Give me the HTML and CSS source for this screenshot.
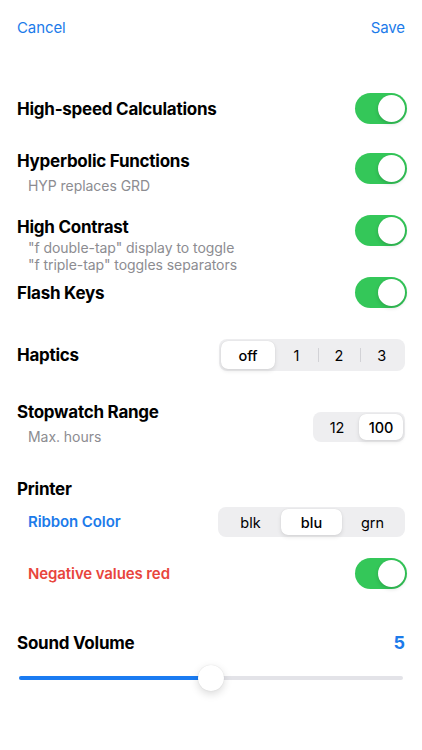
FILE: index.html
```html
<!DOCTYPE html>
<html lang="en">
<head>
<meta charset="utf-8">
<title>Settings</title>
<link rel="stylesheet" href="styles.css">
</head>
<body>
<div class="page">
  <nav class="nav">
    <span class="nav-btn">Cancel</span>
    <span class="nav-btn">Save</span>
  </nav>

  <div class="row row-hsc center">
    <div class="title">High-speed Calculations</div>
    <div class="toggle"><span class="knob"></span></div>
  </div>

  <div class="row row-hyp">
    <div class="block">
      <div class="title">Hyperbolic Functions</div>
      <div class="sub sub-hyp">HYP replaces GRD</div>
    </div>
    <div class="toggle t-hyp"><span class="knob"></span></div>
  </div>

  <div class="row row-hc">
    <div class="block">
      <div class="title t-hc">High Contrast</div>
      <div class="sub sub-hc">"f double-tap" display to toggle<br>"f triple-tap" toggles separators</div>
    </div>
    <div class="toggle"><span class="knob"></span></div>
  </div>

  <div class="row row-fk center">
    <div class="title">Flash Keys</div>
    <div class="toggle"><span class="knob"></span></div>
  </div>

  <div class="row row-hap center">
    <div class="title">Haptics</div>
    <div class="seg seg-hap">
      <span class="opt sel o-wide">off</span>
      <span class="opt">1</span>
      <span class="opt sep">2</span>
      <span class="opt sep">3</span>
    </div>
  </div>

  <div class="row row-sw">
    <div class="block">
      <div class="title">Stopwatch Range</div>
      <div class="sub sub-sw">Max. hours</div>
    </div>
    <div class="seg seg-sw">
      <span class="opt">12</span>
      <span class="opt sel">100</span>
    </div>
  </div>

  <div class="section">Printer</div>

  <div class="row row-rc center">
    <div class="title indent blue">Ribbon Color</div>
    <div class="seg seg-rc">
      <span class="opt">blk</span>
      <span class="opt sel">blu</span>
      <span class="opt">grn</span>
    </div>
  </div>

  <div class="row row-neg center">
    <div class="title indent red">Negative values red</div>
    <div class="toggle"><span class="knob"></span></div>
  </div>

  <div class="row row-vol center">
    <div class="title">Sound Volume</div>
    <div class="vol-value">5</div>
  </div>

  <div class="slider">
    <div class="track">
      <div class="fill" style="width: 192px"></div>
    </div>
    <div class="thumb" style="left: 179px"></div>
  </div>
</div>
</body>
</html>
```

FILE: styles.css
```css
* { box-sizing: border-box; }
html, body { margin: 0; padding: 0; background: #ffffff; }
body {
  font-family: Inter, "Noto Sans", "Liberation Sans", sans-serif;
  color: #000;
  width: 422px;
  height: 750px;
  overflow: hidden;
}
.page {
  padding: 0 15px 0 17px;
  display: flex;
  flex-direction: column;
}
.nav {
  height: 54px;
  display: flex;
  justify-content: space-between;
  align-items: center;
  padding-right: 2px;
}
.nav-btn {
  color: #1c7bea;
  font-size: 15px;
  letter-spacing: -0.1px;
}
.row {
  display: flex;
  justify-content: space-between;
  align-items: flex-start;
}
.row.center { align-items: center; }
.title {
  font-size: 17px;
  font-weight: 700;
  line-height: 22px;
  letter-spacing: -0.25px;
}
.sub {
  color: #8c8c91;
  font-size: 14px;
  padding-left: 11px;
  letter-spacing: -0.05px;
}
.indent { padding-left: 11px; font-weight: 600; font-size: 15px; letter-spacing: -0.1px; }
.blue { color: #1c7bea; }
.red { color: #e8453c; }

.row-hsc { margin-top: 39px; height: 31px; }
.row-hyp { margin-top: 26px; }
.sub-hyp { margin-top: 6px; line-height: 16px; }
.t-hyp { margin-top: 3px; }
.row-hc { margin-top: 21px; }
.t-hc { margin-top: 1px; }
.sub-hc { margin-top: 1px; line-height: 17px; }
.row-fk { margin-top: 4px; height: 31px; }
.row-hap { margin-top: 31px; }
.row-sw { margin-top: 30px; }
.sub-sw { margin-top: 6px; line-height: 16px; }
.section {
  margin-top: 33px;
  font-size: 17px;
  font-weight: 700;
  line-height: 22px;
  letter-spacing: -0.25px;
}
.row-rc { margin-top: 7px; }
.row-neg { margin-top: 21px; }
.row-vol { margin-top: 43px; }

.toggle {
  width: 52px;
  height: 31px;
  border-radius: 16px;
  background: #34c759;
  position: relative;
  flex: none;
}
.knob {
  position: absolute;
  right: 2px;
  top: 2px;
  width: 27px;
  height: 27px;
  border-radius: 50%;
  background: #fff;
  box-shadow: 0 2px 4px rgba(0,0,0,0.15), 0 0 1px rgba(0,0,0,0.1);
}

.seg {
  display: flex;
  background: #eeeef0;
  border-radius: 8px;
  padding: 2px;
  margin-right: 2px;
  flex: none;
}
.seg-hap { width: 186px; height: 32px; }
.seg-sw { width: 92px; height: 30px; margin-top: 11px; }
.seg-rc { width: 187px; height: 30px; }
.opt {
  flex: 1 1 0;
  display: flex;
  align-items: center;
  justify-content: center;
  font-size: 14.5px;
  color: #000;
  position: relative;
  border-radius: 7px;
}
.o-wide { flex: 0 0 54px; }
.opt.sel {
  background: #fff;
  font-weight: 500;
  box-shadow: 0 2px 4px rgba(0,0,0,0.10), 0 0 1px rgba(0,0,0,0.12);
}
.opt.sep::before {
  content: "";
  position: absolute;
  left: 0;
  top: 7px;
  bottom: 7px;
  width: 1px;
  background: #d2d2d6;
}
.vol-value {
  color: #1c7bea;
  font-size: 18px;
  font-weight: 700;
  line-height: 22px;
  padding-right: 2px;
}

.slider {
  margin-top: 11px;
  height: 26px;
  position: relative;
  margin-left: 2px;
  margin-right: 4px;
  display: flex;
  align-items: center;
}
.track {
  width: 100%;
  height: 4px;
  border-radius: 2px;
  background: #e3e3e8;
  position: relative;
  overflow: hidden;
}
.fill {
  height: 100%;
  background: #1a7bf2;
}
.thumb {
  position: absolute;
  top: 0;
  width: 26px;
  height: 26px;
  border-radius: 50%;
  background: #fff;
  box-shadow: 0 3px 8px rgba(0,0,0,0.15), 0 0 1px rgba(0,0,0,0.15);
}
```
